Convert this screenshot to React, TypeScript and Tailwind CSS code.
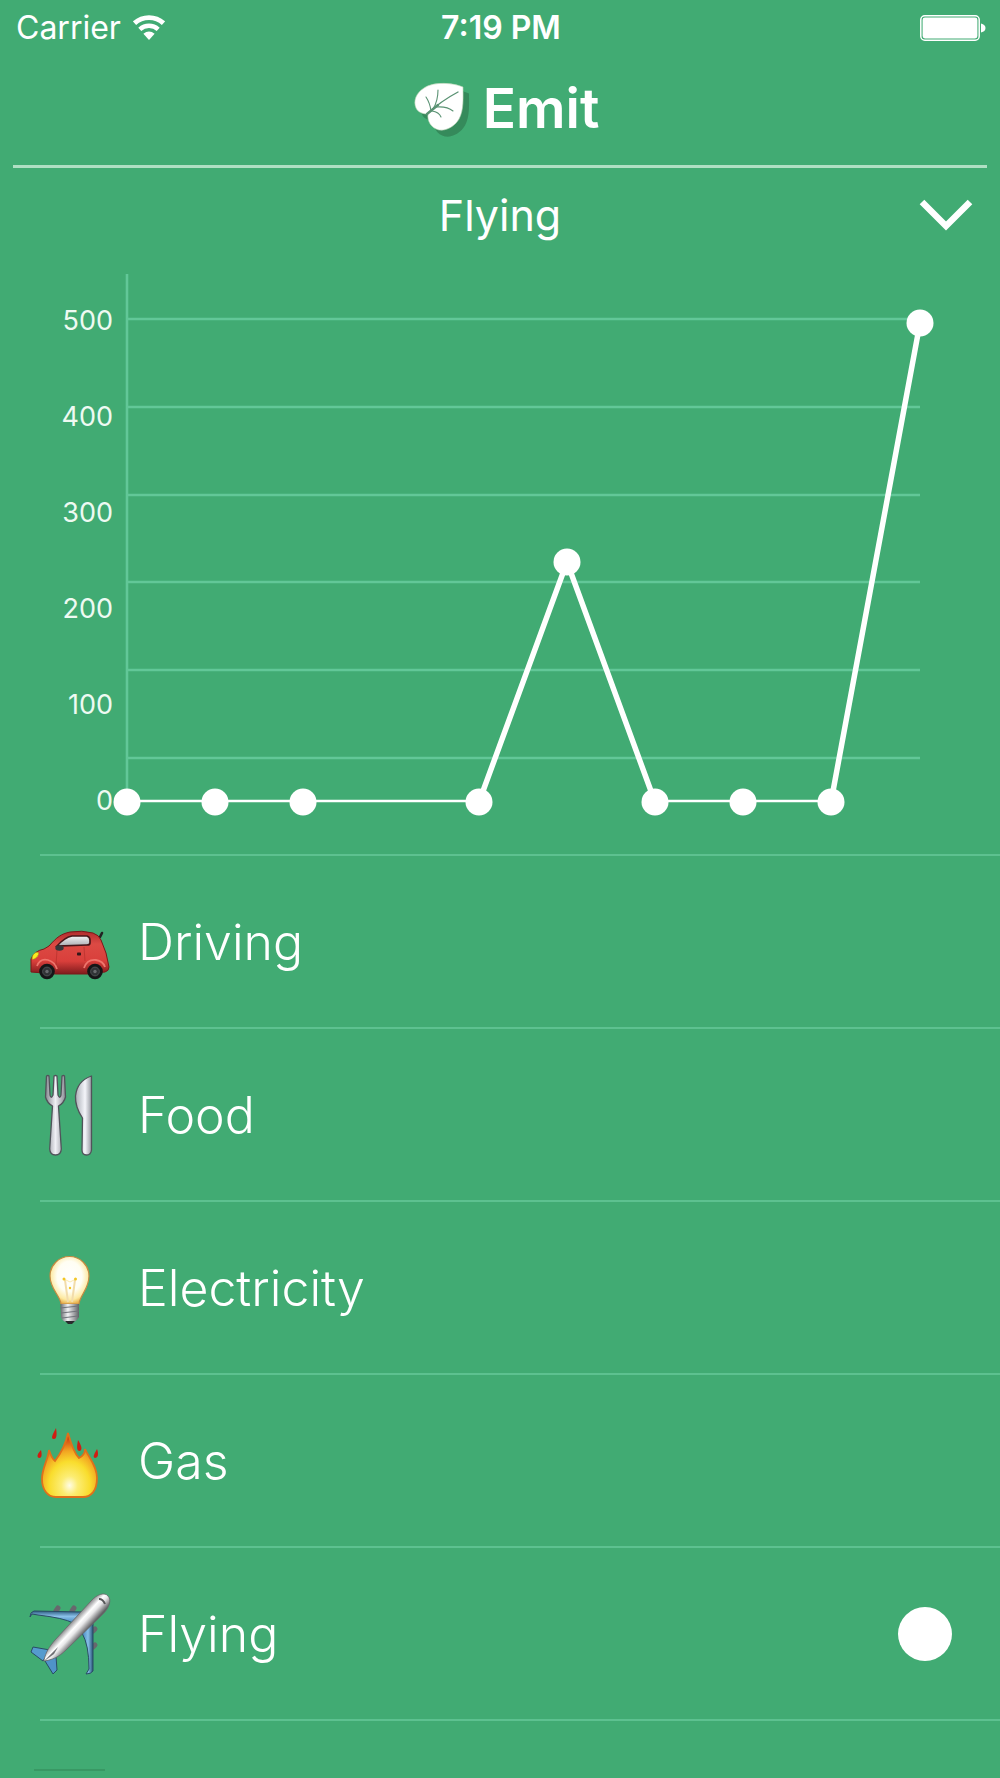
import React, { useState } from "react";

function WifiIcon() {
  return (
    <svg className="h-[26px] w-8" viewBox="0 0 32 26" fill="none" stroke="#fff" aria-hidden="true">
      <path d="M1.5 8.2 A21.5 21.5 0 0 1 30.5 8.2" strokeWidth="4.8" />
      <path d="M6.8 14.3 A13.5 13.5 0 0 1 25.2 14.3" strokeWidth="4.4" />
      <path d="M10.4 18.8 Q16 14.4 21.6 18.8 L16 25 Z" fill="#fff" stroke="none" />
    </svg>
  );
}

function BatteryIcon() {
  return (
    <svg className="h-[26px] w-[66px]" viewBox="0 0 66 26" role="img" aria-label="Battery full">
      <rect x="0.8" y="0.8" width="58.4" height="24.4" rx="4" fill="none" stroke="#fff" strokeWidth="1.5" />
      <rect x="2.6" y="2.6" width="54.8" height="20.8" rx="2.4" fill="#fff" />
      <path d="M61 8.5 Q65.5 9.5 65.5 13 Q65.5 16.5 61 17.5 Z" fill="#fff" />
    </svg>
  );
}

function LeafIcon() {
  const leaf = "M54 9 C45 5 25 3 15 10 C7 15 4 23 7 30 C9 34 13 36 19 36 C18 43 22 50 30 52 C38 53 46 48 50 41 C55 32 54 20 54 9 Z";
  return (
    <svg className="size-[62px]" viewBox="0 0 62 62" aria-hidden="true">
      <path d={leaf} transform="translate(6 6.5)" fill="#358a5b" />
      <path d={leaf} fill="#fff" stroke="#b9d5b6" strokeWidth="0.6" />
      <g fill="none" stroke="#5a9273" strokeLinecap="round">
        <path d="M18 36 Q32 23 49 14" strokeWidth="1.4" />
        <path d="M24 31 Q29 23 29 12 M22 33 Q21 25 17 19 M27 29 Q38 28 44 33 M23 33 Q30 34 32 39" strokeWidth="1.1" />
        <path d="M18 36 L29 27" strokeWidth="2.4" />
      </g>
    </svg>
  );
}

function CarIcon() {
  return (
    <svg className="size-[88px]" viewBox="0 0 88 88" aria-hidden="true">
      <defs>
        <linearGradient id="carBody" x1="0" y1="0" x2="0" y2="1">
          <stop offset="0" stopColor="#b02d2d" />
          <stop offset="0.3" stopColor="#dc4a44" />
          <stop offset="0.7" stopColor="#d93f3b" />
          <stop offset="1" stopColor="#7f1b1d" />
        </linearGradient>
        <linearGradient id="carGlass" x1="0" y1="0" x2="0" y2="1">
          <stop offset="0" stopColor="#f5f5f6" />
          <stop offset="1" stopColor="#a9adb1" />
        </linearGradient>
      </defs>
      <path d="M74 39 L76 35" stroke="#222" strokeWidth="2.6" strokeLinecap="round" />
      <path d="M5 74 L5 61 Q8 53 18 51 L23 48 C31 39 35 36 44 34 Q56 32 67 35 Q73 37 75 42 L80 55 L83 69 Q83 73 79 74 L61 76 L30 76 Z" fill="url(#carBody)" stroke="#7c1819" strokeWidth="1" />
      <path d="M31 48 Q39 39 46 38 L61 38 Q64 39 64 42 L64 45 Q64 47 61 47 Z" fill="url(#carGlass)" stroke="#481719" strokeWidth="1.7" />
      <path d="M11 68 Q14 60 22 62 Q29 64 31 71 M58 70 Q61 61 70 62 Q77 63 79 69" fill="none" stroke="#ee756c" strokeWidth="1.8" />
      <path d="M31 52 L30 67 M58 49 L59 63" stroke="#a62925" strokeWidth="0.8" opacity="0.6" />
      <ellipse cx="33.5" cy="50" rx="4.2" ry="2.7" fill="#36383b" />
      <rect x="51" y="54.5" width="4" height="3" rx="0.8" fill="#33191a" />
      <path d="M6 61 Q6 55 12 54 Q14 56 10 60 Q7 62 6 61 Z" fill="#f9ee20" stroke="#a69417" strokeWidth="0.6" />
      {[21, 69].map((x) => (
        <g key={x}>
          <circle cx={x} cy="73.5" r="7.8" fill="#151617" />
          <circle cx={x} cy="73.5" r="4.4" fill="#303336" stroke="#55585a" strokeWidth="0.8" />
          <circle cx={x} cy="73.5" r="1.7" fill="#686b6e" />
        </g>
      ))}
    </svg>
  );
}

function CutleryIcon() {
  return (
    <svg className="size-[88px]" viewBox="0 0 88 88" aria-hidden="true">
      <defs>
        <linearGradient id="forkSteel" x1="0" y1="0" x2="1" y2="0">
          <stop offset="0" stopColor="#85878f" />
          <stop offset="0.5" stopColor="#f0f0f5" />
          <stop offset="1" stopColor="#898b93" />
        </linearGradient>
        <linearGradient id="knifeSteel" x1="0" y1="0" x2="1" y2="0">
          <stop offset="0" stopColor="#aaaeb6" />
          <stop offset="0.6" stopColor="#f4f5fa" />
          <stop offset="1" stopColor="#9699a1" />
        </linearGradient>
      </defs>
      <g stroke="#50535a" strokeWidth="1.3" strokeLinejoin="round">
        <path d="M20.5 5 Q22 4 23 5 L24 24 Q25 28.500 27 24 L28 5 Q29.500 4 31 5 L32 24 Q34 28.500 35 24 L36 5 Q37.500 4 38.500 5 L39.500 26 Q38 32 32.500 35 L35.300 78 Q35 84 29.500 84 Q24 84 23.700 78 L26.500 35 Q21 32 19.500 26 Z" fill="url(#forkSteel)" />
        <path d="M65.500 5 L65.500 79 Q65 84 60.500 84 Q56 84 56 79 L56.500 47 Q49 36 49.500 25 Q51 10 65.500 5 Z" fill="url(#knifeSteel)" />
      </g>
    </svg>
  );
}

function BulbIcon() {
  return (
    <svg className="size-[88px]" viewBox="0 0 88 88" aria-hidden="true">
      <defs>
        <radialGradient id="bulbGlow" cx="0.5" cy="0.42" r="0.58">
          <stop offset="0" stopColor="#fff" />
          <stop offset="0.55" stopColor="#fffef3" />
          <stop offset="0.85" stopColor="#fde9a0" />
          <stop offset="1" stopColor="#e9b452" />
        </radialGradient>
        <linearGradient id="bulbBase" x1="0" y1="0" x2="1" y2="0">
          <stop offset="0" stopColor="#666a6e" />
          <stop offset="0.4" stopColor="#f3f3f5" />
          <stop offset="1" stopColor="#5e6165" />
        </linearGradient>
      </defs>
      <path d="M35 60 C34 51 24 45 24 32 A19.500 19.500 0 0 1 63 32 C63 45 54 51 53 60 Z" fill="url(#bulbGlow)" stroke="#c48a42" strokeWidth="1.2" />
      <path d="M39 36 L42 58 M49 36 L46 58" stroke="#f2dcab" strokeWidth="2" />
      <path d="M38 35 L44 38 L50 35" fill="none" stroke="#fbe9ae" strokeWidth="1" />
      <g fill="#f3c625"><circle cx="38" cy="35" r="1.5" /><circle cx="49.500" cy="35" r="1.500" /><circle cx="44" cy="44" r="1.200" /></g>
      <path d="M34.500 60 L53 60 L53 73 Q51 77 48 78 L40 78 Q36 77 35 73 Z" fill="url(#bulbBase)" />
      <path d="M34 64 L53 62 M35 69 L53 67 M36 74 L52 72" stroke="#70747a" strokeWidth="1.200" />
      <path d="M39 77 L49 77 L46 80 L42 80 Z" fill="#292b2d" />
    </svg>
  );
}

function FlameIcon() {
  return (
    <svg className="size-[88px]" viewBox="0 0 88 88" aria-hidden="true">
      <defs>
        <radialGradient id="flameFill" cx="0.5" cy="0.82" r="0.75">
          <stop offset="0" stopColor="#fffce5" />
          <stop offset="0.2" stopColor="#fced73" />
          <stop offset="0.5" stopColor="#f9dd2d" />
          <stop offset="0.72" stopColor="#f2a522" />
          <stop offset="1" stopColor="#cf3c12" />
        </radialGradient>
      </defs>
      <path d="M23 33 C25 39 26 42 29 44 C35 36 40 26 42 16 C45 27 48 36 53 41 C57 39 59 36 59 32 C63 41 71 49 71 61 C71 74 65 80 57 80 L30 80 C21 80 16 72 16 62 C16 51 22 43 23 33 Z" fill="url(#flameFill)" stroke="#df711b" strokeWidth="1.800" />
      <g fill="#d01c12">
        <path d="M30 11 C31 17 31 22 28 22 C24 22 27 17 30 11 Z" />
        <path d="M15 33 C16 38 16 41 13 41 C10 40 12 36 15 33 Z" />
        <path d="M52 23 C55 28 57 32 54 34 C50 34 51 29 52 23 Z" />
        <path d="M71 32 C73 37 72 41 69 41 C66 40 69 36 71 32 Z" />
      </g>
    </svg>
  );
}

function PlaneIcon() {
  return (
    <svg className="size-[88px]" viewBox="0 0 88 88" aria-hidden="true">
      <defs>
        <linearGradient id="planeBody" gradientUnits="userSpaceOnUse" x1="43" y1="33" x2="56" y2="45">
          <stop offset="0" stopColor="#77777a" />
          <stop offset="0.4" stopColor="#fff" />
          <stop offset="0.6" stopColor="#e8e8e9" />
          <stop offset="1" stopColor="#626265" />
        </linearGradient>
        <linearGradient id="wingLeft" x1="0" y1="0" x2="0" y2="1">
          <stop offset="0" stopColor="#2d5c81" /><stop offset="0.45" stopColor="#8bc1e9" /><stop offset="1" stopColor="#3f83bc" />
        </linearGradient>
        <linearGradient id="wingRight" x1="0" y1="0" x2="1" y2="0">
          <stop offset="0" stopColor="#4385bb" /><stop offset="0.55" stopColor="#86bee8" /><stop offset="1" stopColor="#285475" />
        </linearGradient>
      </defs>
      <g stroke="#68676d" strokeWidth="5" strokeLinecap="round">
        <path d="M30 21 L32 18 M46 21 L48 18 M67 41 L69 39 M67 57 L69 55" />
      </g>
      <g stroke="#294c65" strokeWidth="1" strokeLinejoin="round">
        <path d="M4 27 Q4 22 8 21 L57 22 L47 33 Q38 28 12 25 L6 24 Z" fill="url(#wingLeft)" />
        <path d="M67 31 L67 81 Q65 84 60 84 L63 79 Q63 55 56 43 Z" fill="url(#wingRight)" />
        <path d="M5 62 L7 57 L24 60 L17 71 Z" fill="#559bce" />
        <path d="M19 71 L30 66 L31 80 L27 84 Z" fill="#4f93c8" />
      </g>
      <path d="M18 70 C20 62 23 57 29 50 L65 11 C71 4 79 2 82 6 C86 10 83 18 77 24 L40 60 C33 67 26 70 18 71 Z" fill="url(#planeBody)" stroke="#67686b" strokeWidth="0.800" />
      <path d="M73 9 Q77 9 79 14" fill="none" stroke="#57585a" strokeWidth="2" />
      <path d="M17 72 L32 57 L28 64 Z" fill="#707174" />
    </svg>
  );
}

const categories = [
  { name: "Driving", Icon: CarIcon },
  { name: "Food", Icon: CutleryIcon },
  { name: "Electricity", Icon: BulbIcon },
  { name: "Gas", Icon: FlameIcon },
  { name: "Flying", Icon: PlaneIcon },
];

const points = [
  [127, 542], [215, 542], [303, 542], [479, 542], [567, 302],
  [655, 542], [743, 542], [831, 542], [920, 63],
];

function Chart() {
  return (
    <svg className="block w-full" viewBox="0 0 1000 594" role="img" aria-label="Flying emissions">
      <g stroke="#62c798" strokeWidth="2.600">
        <path d="M127 14 V541" />
        {[59, 147, 235, 322, 410, 498].map((y) => <path key={y} d={`M127 ${y} H920`} />)}
      </g>
      <g fill="#eefaf2" fontFamily="Inter, sans-serif" fontSize="27" textAnchor="end">
        {[500, 400, 300, 200, 100, 0].map((n, i) => <text key={n} x="113" y={70 + i * 96}>{n}</text>)}
      </g>
      <path d="M127 541 H479 M655 541 H831" stroke="#fff" strokeWidth="2.500" />
      <path d="M479 542 L567 302 L655 542 M831 542 L920 63" fill="none" stroke="#fff" strokeWidth="5.500" strokeLinejoin="bevel" />
      {points.map(([x, y]) => <circle key={x} cx={x} cy={y} r="13.500" fill="#fff" />)}
    </svg>
  );
}

export default function App() {
  const [selected, setSelected] = useState("Flying");
  return (
    <main className="min-h-screen overflow-hidden bg-[#41ab73] font-['Inter',sans-serif] text-white">
      <div className="grid h-14 grid-cols-3 items-center pr-3.5 pl-4 text-[32px]">
        <div className="flex items-center gap-3">
          <span>Carrier</span>
          <WifiIcon />
        </div>
        <time className="text-center font-semibold">7:19 PM</time>
        <div className="flex justify-end"><BatteryIcon /></div>
      </div>
      <header className="mx-[13px] flex h-28 items-center justify-center gap-3 border-b-3 border-[#afdfc3] pr-1 pb-1 pl-3">
        <LeafIcon />
        <h1 className="text-[55px] leading-none font-semibold">Emit</h1>
      </header>
      <section>
        <div className="grid h-[92px] grid-cols-[1fr_auto_1fr] items-center px-6 pt-0.5">
          <h2 className="col-start-2 text-[43px] leading-none font-normal">{selected}</h2>
          <button type="button" aria-label="Choose category" className="flex size-15 items-center justify-center justify-self-end">
            <svg className="h-8 w-[54px]" viewBox="0 0 54 32" fill="none" aria-hidden="true">
              <path d="M3 3 L27 27 L51 3" stroke="#fff" strokeWidth="6.5" />
            </svg>
          </button>
        </div>
        <Chart />
      </section>
      <ul className="ml-10">
        {categories.map(({ name, Icon }) => (
          <li key={name} className="border-t-2 border-[#5dc190]">
            <label className="-ml-3.5 flex h-[171px] cursor-pointer items-center gap-6 pr-12">
              <Icon />
              <span className="flex-1 text-[50px] leading-none font-light">{name}</span>
              <input
                type="radio"
                name="category"
                value={name}
                checked={selected === name}
                onChange={() => setSelected(name)}
                className="size-[54px] appearance-none rounded-full checked:bg-white"
              />
            </label>
          </li>
        ))}
        <li className="h-[58px] border-t-2 border-[#5dc190] pt-12">
          <div className="-ml-1.5 h-0.5 w-[71px] bg-[#399864]" />
        </li>
      </ul>
    </main>
  );
}
